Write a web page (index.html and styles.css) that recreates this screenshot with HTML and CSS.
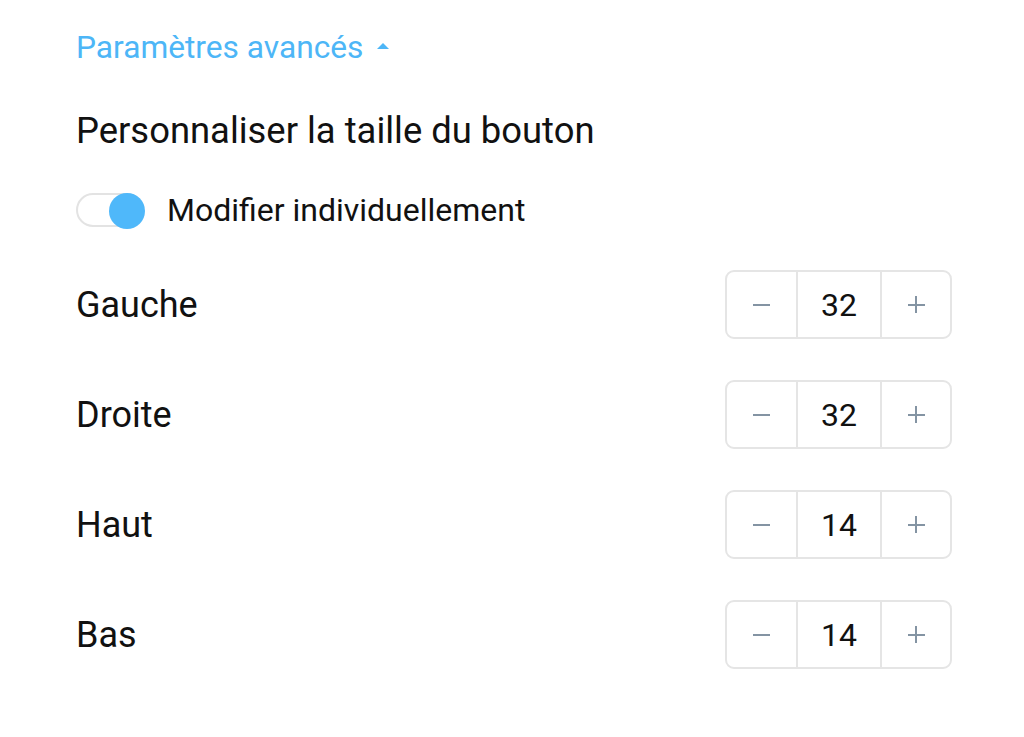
FILE: index.html
```html
<!DOCTYPE html>
<html lang="fr">
<head>
<meta charset="utf-8">
<link rel="stylesheet" href="styles.css">
</head>
<body>
<div class="panel">
  <div class="adv">Paramètres avancés <span class="caret"></span></div>
  <div class="title">Personnaliser la taille du bouton</div>
  <div class="toggle-row">
    <span class="toggle"><span class="knob"></span></span>
    <span class="toggle-label">Modifier individuellement</span>
  </div>
  <div class="row">
    <span class="label">Gauche</span>
    <div class="stepper"><span class="btn btn-l"><span class="minus"></span></span><span class="val">32</span><span class="btn btn-r"><span class="plus"></span></span></div>
  </div>
  <div class="row">
    <span class="label">Droite</span>
    <div class="stepper"><span class="btn btn-l"><span class="minus"></span></span><span class="val">32</span><span class="btn btn-r"><span class="plus"></span></span></div>
  </div>
  <div class="row">
    <span class="label">Haut</span>
    <div class="stepper"><span class="btn btn-l"><span class="minus"></span></span><span class="val">14</span><span class="btn btn-r"><span class="plus"></span></span></div>
  </div>
  <div class="row">
    <span class="label">Bas</span>
    <div class="stepper"><span class="btn btn-l"><span class="minus"></span></span><span class="val">14</span><span class="btn btn-r"><span class="plus"></span></span></div>
  </div>
</div>
</body>
</html>
```
FILE: styles.css
```css
html, body { margin: 0; padding: 0; background: #fff; }
body { font-family: Roboto, "Liberation Sans", sans-serif; color: #111; }
.panel { width: 876px; padding: 28px 0 0 76px; }
.adv { color: #4db6f7; font-size: 31.7px; line-height: 40px; height: 40px; display: flex; align-items: center; }
.caret { display: inline-block; width: 0; height: 0; border-left: 6px solid transparent; border-right: 6px solid transparent; border-bottom: 6px solid #4db6f7; margin-left: 14px; margin-top: -4px; }
.title { font-size: 36.4px; line-height: 40px; height: 40px; margin-top: 43px; }
.toggle-row { display: flex; align-items: center; margin-top: 40px; height: 38px; }
.toggle { position: relative; width: 68px; height: 34px; box-sizing: border-box; border: 2px solid #e3e3e3; border-radius: 17px; background: #fff; }
.knob { position: absolute; right: -3px; top: -2px; width: 36px; height: 36px; border-radius: 50%; background: #4fb8fa; }
.toggle-label { font-size: 32px; line-height: 38px; margin-left: 23px; }
.row { display: flex; align-items: center; justify-content: space-between; height: 69px; margin-top: 41px; }
.toggle-row + .row { margin-top: 41px; }
.label { font-size: 36px; line-height: 40px; }
.stepper { display: flex; width: 227px; height: 69px; box-sizing: border-box; border: 2px solid #e5e5e5; border-radius: 9px; }
.btn { display: flex; align-items: center; justify-content: center; }
.btn-l { width: 69px; }
.btn-r { width: 68px; }
.val { width: 82px; border-left: 2px solid #e5e5e5; border-right: 2px solid #e5e5e5; display: flex; align-items: center; justify-content: center; font-size: 32px; color: #111; }
.minus { width: 17px; height: 2px; background: #8494a3; }
.plus { position: relative; width: 17px; height: 17px; }
.plus::before, .plus::after { content: ""; position: absolute; background: #8494a3; }
.plus::before { left: 0; top: 7.5px; width: 17px; height: 2px; }
.plus::after { left: 7.5px; top: 0; width: 2px; height: 17px; }
```
